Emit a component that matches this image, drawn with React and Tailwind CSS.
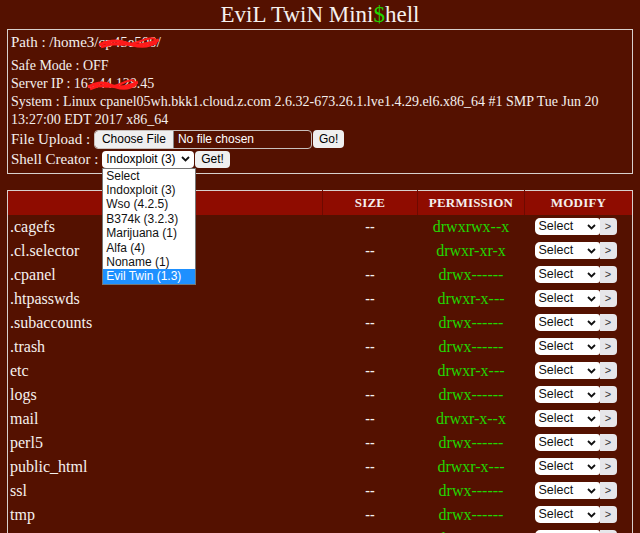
import React from 'react';

const rows = [
  ['.cagefs', 'drwxrwx--x'],
  ['.cl.selector', 'drwxr-xr-x'],
  ['.cpanel', 'drwx------'],
  ['.htpasswds', 'drwxr-x---'],
  ['.subaccounts', 'drwx------'],
  ['.trash', 'drwx------'],
  ['etc', 'drwxr-x---'],
  ['logs', 'drwx------'],
  ['mail', 'drwxr-x--x'],
  ['perl5', 'drwx------'],
  ['public_html', 'drwxr-x---'],
  ['ssl', 'drwx------'],
  ['tmp', 'drwx------'],
  ['var', 'drwxr-x---'],
];

const shells = ['Select', 'Indoxploit (3)', 'Wso (4.2.5)', 'B374k (3.2.3)', 'Marijuana (1)', 'Alfa (4)', 'Noname (1)', 'Evil Twin (1.3)'];

const Chevron = () => (
  <svg width="9" height="6" viewBox="0 0 9 6" className="shrink-0">
    <path d="M1 1l3.5 3.5L8 1" fill="none" stroke="#111" strokeWidth="1.8" />
  </svg>
);

const Scribble = ({ w }) => (
  <svg width={w} height="14" viewBox={`0 0 ${w} 14`} className="absolute left-0 top-[3px]">
    <path d={`M0 9 Q${w * 0.25} 2 ${w * 0.45} 7 T${w} 4`} fill="none" stroke="#ff1a1a" strokeWidth="3" />
    <path d={`M2 11 Q${w * 0.3} 5 ${w * 0.55} 9 T${w - 2} 6`} fill="none" stroke="#ff1a1a" strokeWidth="2.5" />
    <path d={`M4 6 Q${w * 0.4} 12 ${w * 0.7} 5 T${w - 4} 9`} fill="none" stroke="#ff1a1a" strokeWidth="2" />
  </svg>
);

export default function App() {
  return (
    <div className="min-h-screen bg-[#541100] text-[#f5f0ee] font-['Liberation_Serif',serif] overflow-hidden">
      <h1 className="text-center text-[23px] leading-[29px] h-[29px]">
        EviL TwiN Mini<span className="text-[#22d600]">$</span>hell
      </h1>

      {/* info box */}
      <div className="mx-[7px] border border-[#d8d0cc] px-[3px] pt-[3px] pb-[4px] text-[14px] leading-[18px]">
        <div className="mb-[6px] text-[15px]">
          Path : /home3/
          <span className="relative inline-block">
            cp45e500
            <Scribble w={60} />
          </span>
          /
        </div>
        <div>Safe Mode : OFF</div>
        <div>
          Server IP : 16
          <span className="relative inline-block">
            3.44.128.
            <Scribble w={50} />
          </span>
          45
        </div>
        <div>System : Linux cpanel05wh.bkk1.cloud.z.com 2.6.32-673.26.1.lve1.4.29.el6.x86_64 #1 SMP Tue Jun 20 13:27:00 EDT 2017 x86_64</div>
        <div className="flex items-center h-[20px] text-[15px]">
          <span>File Upload :&nbsp;</span>
          <span className="flex items-center h-[19px] w-[218px] border border-[#c8c0bc] rounded-[4px] overflow-hidden font-['Liberation_Sans',sans-serif] text-[12px]">
            <span className="h-full px-[7px] flex items-center bg-[#efefef] text-black border-r border-[#8a8a8a] rounded-l-[3px]">Choose File</span>
            <span className="pl-[4px] text-white">No file chosen</span>
          </span>
          <span className="ml-[1px] h-[18px] px-[6px] flex items-center bg-[#efefef] rounded-[4px] text-black font-['Liberation_Sans',sans-serif] text-[12px]">Go!</span>
        </div>
        <div className="flex items-center h-[20px] text-[15px]">
          <span>Shell Creator :&nbsp;</span>
          <span className="relative">
            <span className="flex items-center justify-between h-[17px] w-[92px] bg-white rounded-[4px] px-[4px] text-black font-['Liberation_Sans',sans-serif] text-[12px]">
              Indoxploit (3)
              <Chevron />
            </span>
            <span className="absolute left-0 top-[17px] z-10 w-[94px] bg-white border border-[#767676] text-[#111] font-['Liberation_Sans',sans-serif] text-[12px] leading-[14.4px]">
              {shells.map((s, i) => (
                <span key={s} className={'block pl-[3px] ' + (i === shells.length - 1 ? 'bg-[#1e90ff] text-white' : '')}>{s}</span>
              ))}
            </span>
          </span>
          <span className="ml-[1px] h-[17px] px-[6px] flex items-center bg-[#efefef] rounded-[4px] text-black font-['Liberation_Sans',sans-serif] text-[12px]">Get!</span>
        </div>
      </div>

      {/* file table */}
      <table className="mx-[7px] mt-[16px] w-[626px] border border-[#d8d0cc] border-collapse text-[16px] table-fixed">
        <thead>
          <tr className="bg-[#8f0c00] h-[24px] text-[13px] font-bold tracking-[0.2px]">
            <th className="w-[315px] border-r border-[#6e0a00]"></th>
            <th className="w-[95px] border-r border-[#6e0a00]">SIZE</th>
            <th className="w-[107px] border-r border-[#6e0a00]">PERMISSION</th>
            <th>MODIFY</th>
          </tr>
        </thead>
        <tbody>
          {rows.map(([name, perm]) => (
            <tr key={name} className="h-[24px]">
              <td className="pl-[2px]">{name}</td>
              <td className="text-center font-bold text-[14px]">--</td>
              <td className="text-center text-[#22d600]">{perm}</td>
              <td>
                <div className="flex items-center pl-[10px]">
                  <span className="flex items-center justify-between h-[17px] w-[65px] bg-white rounded-l-[5px] rounded-r-[3px] px-[4px] text-[#111] font-['Liberation_Sans',sans-serif] text-[12.5px]">
                    Select
                    <Chevron />
                  </span>
                  <span className="h-[17px] w-[17px] flex items-center justify-center bg-[#e6e6ea] rounded-r-[4px] text-[#333] font-['Liberation_Sans',sans-serif] text-[11px]">&gt;</span>
                </div>
              </td>
            </tr>
          ))}
        </tbody>
      </table>
    </div>
  );
}
